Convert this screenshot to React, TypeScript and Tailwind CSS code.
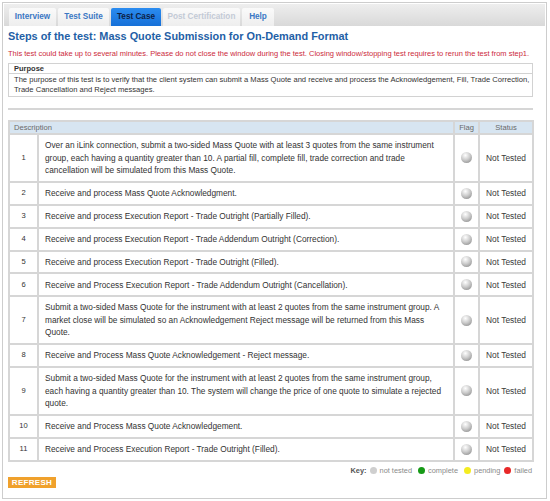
const tabs = [
  { label: "Interview", w: "w-[47px]", state: "normal" },
  { label: "Test Suite", w: "w-[51px]", state: "normal" },
  { label: "Test Case", w: "w-[50px]", state: "active" },
  { label: "Post Certification", w: "w-[77px]", state: "disabled" },
  { label: "Help", w: "w-[32px]", state: "normal" },
];

const steps: string[][] = [
  [
    "Over an iLink connection, submit a two-sided Mass Quote with at least 3 quotes from the same instrument",
    "group, each having a quantity greater than 10. A partial fill, complete fill, trade correction and trade",
    "cancellation will be simulated from this Mass Quote.",
  ],
  ["Receive and process Mass Quote Acknowledgment."],
  ["Receive and process Execution Report - Trade Outright (Partially Filled)."],
  ["Receive and process Execution Report - Trade Addendum Outright (Correction)."],
  ["Receive and process Execution Report - Trade Outright (Filled)."],
  ["Receive and Process Execution Report - Trade Addendum Outright (Cancellation)."],
  [
    "Submit a two-sided Mass Quote for the instrument with at least 2 quotes from the same instrument group. A",
    "market close will be simulated so an Acknowledgement Reject message will be returned from this Mass",
    "Quote.",
  ],
  ["Receive and Process Mass Quote Acknowledgement - Reject message."],
  [
    "Submit a two-sided Mass Quote for the instrument with at least 2 quotes from the same instrument group,",
    "each having a quantity greater than 10. The system will change the price of one quote to simulate a rejected",
    "quote.",
  ],
  ["Receive and Process Mass Quote Acknowledgement."],
  ["Receive and Process Execution Report - Trade Outright (Filled)."],
];

function Ball() {
  return (
    <span className="inline-block w-[11px] h-[11px] rounded-full bg-[radial-gradient(circle_at_40%_30%,#ffffff_0%,#cccccc_45%,#7e7e7e_100%)]" />
  );
}

function KeyDot({ color }: { color: string }) {
  return <span className={`inline-block w-[7px] h-[7px] rounded-full ${color}`} />;
}

export default function App() {
  return (
    <div className="w-[550px] h-[501px] bg-white font-['Liberation_Sans',Arial,sans-serif] overflow-hidden">
      <div className="ml-[2px] mt-[2px] w-[545px] h-[497px] border border-[#cdcdcd]">
        {/* tab strip */}
        <div className="h-[22px] mx-[1px] mt-[1px] bg-gradient-to-b from-[#eeeeee] to-[#d9d9d9] flex items-end gap-[2px] pl-[5px]">
          {tabs.map((t) => (
            <div
              key={t.label}
              className={`${t.w} h-[18px] rounded-t-[2px] flex items-center justify-center text-[8.2px] font-bold ${
                t.state === "active"
                  ? "bg-gradient-to-b from-[#2b8cf0] to-[#1670d8] text-[#0d1f45]"
                  : t.state === "disabled"
                  ? "bg-gradient-to-b from-[#fafafa] to-[#eeeeee] text-[#c3cad6]"
                  : "bg-gradient-to-b from-[#fafafa] to-[#eeeeee] text-[#3b78c4]"
              }`}
            >
              {t.label}
            </div>
          ))}
        </div>

        <div className="px-[5px] w-[540px]">
          <h1 className="mt-[3px] text-[10.9px] leading-[14px] font-bold text-[#1f5fa6]">
            Steps of the test: Mass Quote Submission for On-Demand Format
          </h1>
          <p className="mt-[5px] text-[7.5px] leading-[11px] text-[#cc2a3c] whitespace-nowrap">
            This test could take up to several minutes. Please do not close the window during the test. Closing
            window/stopping test requires to rerun the test from step1.
          </p>

          <div className="mt-[4px] w-[525px] border border-[#d2d2d2]">
            <div className="h-[10px] px-[5px] border-b border-[#d2d2d2] text-[7.5px] leading-[10px] font-bold text-[#333]">
              Purpose
            </div>
            <div className="px-[5px] pt-[1px] pb-[2px] text-[7.6px] leading-[9.5px] text-[#333] whitespace-nowrap">
              The purpose of this test is to verify that the client system can submit a Mass Quote and receive and
              process the Acknowledgement, Fill, Trade Correction,
              <br />
              Trade Cancellation and Reject messages.
            </div>
          </div>

          <div className="mt-[11px] w-[525px] h-[2px] bg-[#d6d6d6]" />

          <table className="mt-[10px] w-[524px] border-collapse border-2 border-[#d6d6d6] text-[8.3px] text-[#333] table-fixed">
            <colgroup>
              <col className="w-[29px]" />
              <col className="w-[416px]" />
              <col className="w-[25px]" />
              <col className="w-[54px]" />
            </colgroup>
            <thead>
              <tr className="bg-[#d7e5f1] h-[13px] text-[#6a6a6a] text-[7.6px]">
                <th colSpan={2} className="border-2 border-[#d6d6d6] text-left font-normal pl-[4px] leading-[9px]">
                  Description
                </th>
                <th className="border-2 border-[#d6d6d6] font-normal leading-[9px]">Flag</th>
                <th className="border-2 border-[#d6d6d6] font-normal leading-[9px]">Status</th>
              </tr>
            </thead>
            <tbody>
              {steps.map((lines, i) => (
                <tr key={i}>
                  <td className="border-2 border-[#d6d6d6] text-center py-[4.2px] leading-[12.5px] text-[7.6px]">
                    {i + 1}
                  </td>
                  <td className="border-2 border-[#d6d6d6] pl-[6px] py-[4.2px] leading-[12.5px] whitespace-nowrap">
                    {lines.map((l, j) => (
                      <div key={j}>{l}</div>
                    ))}
                  </td>
                  <td className="border-2 border-[#d6d6d6] text-center align-middle">
                    <div className="flex justify-center">
                      <Ball />
                    </div>
                  </td>
                  <td className="border-2 border-[#d6d6d6] text-center text-[8.4px] text-[#3a3a3a]">Not Tested</td>
                </tr>
              ))}
            </tbody>
          </table>

          <div className="w-[524px] mt-[4px] flex justify-end items-center gap-[3px] text-[7.4px] text-[#8a8a8a] leading-[10px]">
            <span className="font-bold text-[#555]">Key:</span>
            <KeyDot color="bg-[#cfcfcf]" />
            <span className="mr-[3px]">not tested</span>
            <KeyDot color="bg-[#169a16]" />
            <span className="mr-[3px]">complete</span>
            <KeyDot color="bg-[#f4ec20]" />
            <span className="mr-[1px]">pending</span>
            <KeyDot color="bg-[#e82828]" />
            <span>failed</span>
          </div>

          <button className="mt-[1px] w-[48px] h-[11px] bg-[#f0a12c] text-white text-[8px] leading-[11px] font-bold tracking-[0.3px] flex items-center justify-center">
            REFRESH
          </button>
        </div>
      </div>
    </div>
  );
}
